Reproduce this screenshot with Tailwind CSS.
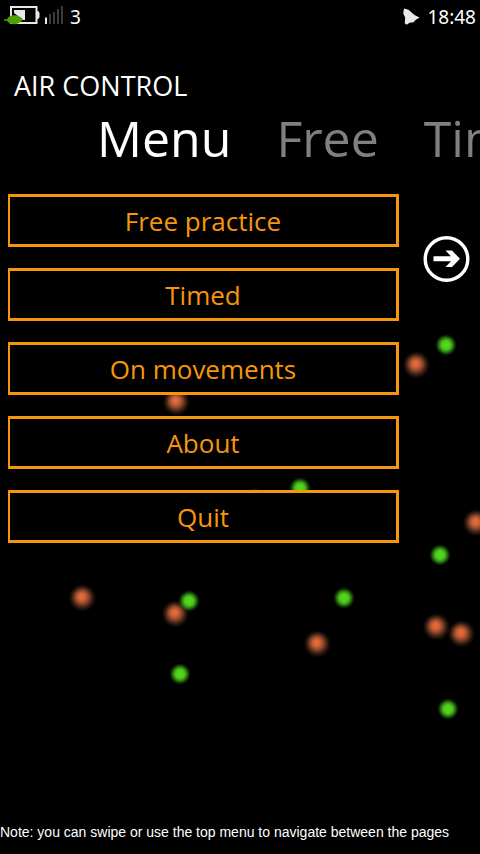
<!DOCTYPE html>
<html lang="en">
<head>
<meta charset="utf-8">
<meta name="viewport" content="width=device-width, initial-scale=1">
<title>Air Control</title>
<script src="https://cdn.jsdelivr.net/npm/@tailwindcss/browser@4"></script>
</head>
<body class="relative flex min-h-screen flex-col overflow-x-hidden bg-black font-['Open_Sans','Noto_Sans',sans-serif] text-white">
<svg class="pointer-events-none absolute top-0 left-0 h-[854px] w-[480px]" viewBox="0 0 480 854" aria-hidden="true">
  <defs>
    <radialGradient id="o" fx="0.46" fy="0.44"><stop offset="0" stop-color="#ee6c39"/><stop offset=".25" stop-color="#d06338"/><stop offset=".5" stop-color="#9c4f31" stop-opacity=".85"/><stop offset=".75" stop-color="#6b3824" stop-opacity=".45"/><stop offset="1" stop-color="#402010" stop-opacity="0"/></radialGradient>
    <radialGradient id="g"><stop offset="0" stop-color="#57dc20"/><stop offset=".4" stop-color="#4dcb1c"/><stop offset=".65" stop-color="#3a9d16" stop-opacity=".75"/><stop offset="1" stop-color="#1c5008" stop-opacity="0"/></radialGradient>
    <circle id="op" cx=".5" r="14" fill="url(#o)"/>
    <circle id="gp" r="11" fill="url(#g)"/>
  </defs>
  <use href="#op" x="416" y="365"/><use href="#op" x="176" y="402"/><use href="#op" x="476" y="523"/><use href="#op" x="82" y="598"/><use href="#op" x="175" y="614"/><use href="#op" x="317" y="644"/><use href="#op" x="436" y="627"/><use href="#op" x="461" y="634"/>
  <use href="#gp" x="446" y="345"/><use href="#gp" x="300" y="488"/><use href="#gp" x="255" y="499"/><use href="#gp" x="440" y="555"/><use href="#gp" x="189" y="601"/><use href="#gp" x="344" y="598"/><use href="#gp" x="180" y="674"/><use href="#gp" x="448" y="709"/>
</svg>

<header class="relative flex h-[34px] items-center justify-between pr-1 pl-1 font-['Noto_Sans',sans-serif] text-[19px]">
  <div class="flex items-center">
    <svg class="h-[34px] w-[60px]" viewBox="4 0 60 34" role="img" aria-label="Battery and signal">
      <path d="M11 7h25.500v16H11z" fill="none" stroke="#ede6ea" stroke-width="2"/>
      <path d="M37 11h1q1.500 1 1.500 2.500v3q0 1.500-1.500 2.500h-1z" fill="#ede6ea"/>
      <path d="M14 10h11v10h-2L14 13z" fill="#ede6ea"/>
      <path d="M4 19.300h3C9 14.500 18 13.500 23 19.500C19 25.500 10 25.500 7 20.800H4z" fill="#4f9f05"/>
      <path d="M45 17.500h2V24h-2z" fill="#ede6ea"/>
      <path d="M49 14h2v10h-2zM53 12h2v12h-2zM57 9h2v15h-2zM61 6h2v18h-2z" fill="#3b3d3d"/>
    </svg>
    <span class="pl-1.5">3</span>
  </div>
  <div class="flex items-center gap-1.5">
    <svg class="h-5 w-5" viewBox="401 6 20 20" aria-label="Notifications" role="img"><path d="M404 7.500l4.500 1.300 4.500 4 2 1.500 4.500 2.200-4 2.500-2 2.200-4 .5-2.800 2-2-1.500.5-5.500-2-4.500z" fill="#ede6ea"/></svg>
    <time>18:48</time>
  </div>
</header>

<h1 class="relative mt-8 pl-3.5 text-[27px] leading-10">AIR CONTROL</h1>
<nav class="relative flex h-16 gap-[45px] overflow-hidden pl-[97px] text-[50px] leading-16 whitespace-nowrap" aria-label="Pages">
  <a href="#menu" aria-current="page">Menu</a>
  <a href="#free" class="text-[#808080]">Free</a>
  <a href="#timed" class="text-[#808080]">Timed</a>
</nav>

<main id="menu" class="relative flex flex-1 items-start gap-6 pt-6 pr-[10px] pl-2">
  <div class="flex flex-1 flex-col gap-[21px] text-[26px] text-[#f7960b]">
    <button type="button" class="h-[53px] border-3 border-l-2 border-[#f7960b] bg-black pt-0.5">Free practice</button>
    <button type="button" class="h-[53px] border-3 border-l-2 border-[#f7960b] bg-black pt-0.5">Timed</button>
    <button type="button" class="h-[53px] border-3 border-l-2 border-[#f7960b] bg-black pt-0.5">On movements</button>
    <button type="button" class="h-[53px] border-3 border-l-2 border-[#f7960b] bg-black pt-0.5">About</button>
    <button type="button" class="h-[53px] border-3 border-l-2 border-[#f7960b] bg-black pt-0.5">Quit</button>
  </div>
  <button type="button" class="mt-[42px] shrink-0" aria-label="Next page">
    <svg class="h-[47px] w-[47px]" viewBox="0 0 47 47"><circle cx="23.500" cy="23" r="21.300" fill="none" stroke="#fff" stroke-width="3.400"/><path d="M10.500 20.300h17.500l-5.500-5.800h6.500l8 8.300-8 8.200h-6.500l5.500-5.700h-17.500z" fill="#fff"/></svg>
  </button>
</main>

<footer class="relative pb-3 font-['Liberation_Sans',Arial,sans-serif] text-sm leading-5 whitespace-nowrap">Note: you can swipe or use the top menu to navigate between the pages</footer>
</body>
</html>
